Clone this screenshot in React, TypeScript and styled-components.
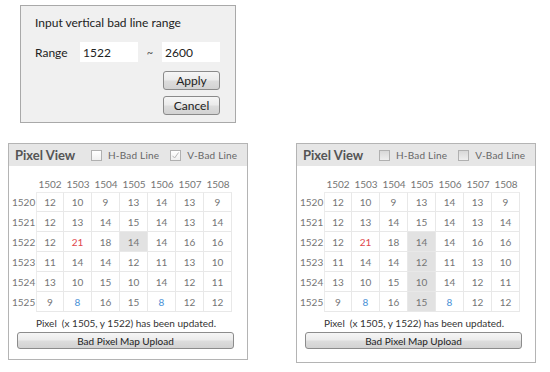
import { FC } from 'react';
import styled, { createGlobalStyle } from 'styled-components';

const GlobalStyle = createGlobalStyle`
  html, body {
    margin: 0;
    padding: 0;
    background: #ffffff;
    font-family: 'Lato', 'Noto Sans', sans-serif;
  }
`;

const Page = styled.div`
  width: 550px;
  height: 372px;
  padding-top: 5px;
  box-sizing: border-box;
  display: flex;
  flex-direction: column;
`;

const Dialog = styled.div`
  margin-left: 20px;
  width: 216px;
  height: 118px;
  box-sizing: border-box;
  border: 1px solid #a9a9a9;
  background: #f0f0f0;
  padding: 10px 15px 0 14px;
  display: flex;
  flex-direction: column;
`;

const DialogTitle = styled.div`
  font-size: 12px;
  line-height: 14px;
  color: #222;
`;

const RangeRow = styled.div`
  margin-top: 12px;
  display: flex;
  align-items: center;
`;

const RangeLabel = styled.span`
  width: 45px;
  font-size: 12px;
  color: #222;
`;

const RangeInput = styled.input`
  width: 58px;
  height: 20px;
  box-sizing: border-box;
  border: none;
  background: #ffffff;
  padding: 0 3px;
  font-family: inherit;
  font-size: 12px;
  color: #222;
  outline: none;
`;

const Tilde = styled.span`
  width: 24px;
  text-align: center;
  font-size: 11px;
  color: #555;
`;

const ButtonColumn = styled.div`
  display: flex;
  flex-direction: column;
  align-items: flex-end;
  gap: 6px;
  margin-top: 9px;
`;

const WinButton = styled.button<{ $width: number }>`
  width: ${(p) => p.$width}px;
  height: 19px;
  box-sizing: border-box;
  border: 1px solid #8a8a8a;
  border-radius: 3px;
  background: linear-gradient(#f6f6f6 0%, #ebebeb 48%, #dddddd 52%, #d2d2d2 100%);
  font-family: inherit;
  font-size: 12px;
  color: #222;
  padding: 0;
  cursor: pointer;
`;

const PanelRow = styled.div`
  margin-top: 20px;
  padding-left: 8px;
  display: flex;
  gap: 48px;
  align-items: flex-start;
`;

const Panel = styled.div<{ $height: number }>`
  width: 240px;
  height: ${(p) => p.$height}px;
  box-sizing: border-box;
  border: 1px solid #b4b4b4;
  background: #ffffff;
  display: flex;
  flex-direction: column;
`;

const PanelHeader = styled.div`
  height: 22px;
  background: #e6e6e6;
  display: flex;
  align-items: center;
  padding-left: 6px;
  white-space: nowrap;
`;

const PanelTitle = styled.span`
  flex-shrink: 0;
  font-size: 13px;
  font-weight: 700;
  color: #555;
  width: 76px;
`;

const CheckGroup = styled.label`
  flex-shrink: 0;
  display: flex;
  align-items: center;
  gap: 6px;
  margin-right: 11px;
  font-size: 10px;
  color: #666;
  letter-spacing: 0.2px;
  white-space: nowrap;
`;

const CheckBox = styled.span<{ $shaded?: boolean }>`
  width: 11px;
  height: 11px;
  box-sizing: border-box;
  border: 1px solid #b0b0b0;
  background: ${(p) =>
    p.$shaded ? 'linear-gradient(#d8d8d8, #eeeeee)' : 'linear-gradient(#ffffff, #f0f0f0)'};
  display: flex;
  align-items: center;
  justify-content: center;
`;

const PanelBody = styled.div`
  padding: 9px 0 0 3px;
  display: flex;
  flex-direction: column;
`;

const Grid = styled.div`
  display: grid;
  grid-template-columns: 24px repeat(7, 28px);
  grid-template-rows: 17px;
  grid-auto-rows: 20px;
  font-size: 10px;
  color: #757575;
`;

const ColHead = styled.div`
  display: flex;
  align-items: center;
  justify-content: center;
`;

const RowHead = styled.div`
  display: flex;
  align-items: center;
`;

const Cell = styled.div<{ $hl?: boolean; $tone?: 'red' | 'blue'; $left?: boolean; $top?: boolean }>`
  display: flex;
  align-items: center;
  justify-content: center;
  border-right: 1px solid #e8e8e8;
  border-bottom: 1px solid #e8e8e8;
  border-left: ${(p) => (p.$left ? '1px solid #ececec' : 'none')};
  border-top: ${(p) => (p.$top ? '1px solid #ececec' : 'none')};
  background: ${(p) => (p.$hl ? '#e2e2e2' : '#ffffff')};
  color: ${(p) => (p.$tone === 'red' ? '#e0474c' : p.$tone === 'blue' ? '#4a8fd6' : '#757575')};
`;

const Status = styled.div`
  margin-top: 5px;
  text-align: center;
  font-size: 10px;
  line-height: 13px;
  color: #333;
  width: 228px;
`;

const UploadButton = styled(WinButton)`
  margin-top: 2px;
  margin-left: 5px;
  height: 17px;
  font-size: 10px;
  border-color: #8c8c8c;
`;

const cols = [1502, 1503, 1504, 1505, 1506, 1507, 1508];
const rows: { y: number; v: number[] }[] = [
  { y: 1520, v: [12, 10, 9, 13, 14, 13, 9] },
  { y: 1521, v: [12, 13, 14, 15, 14, 13, 14] },
  { y: 1522, v: [12, 21, 18, 14, 14, 16, 16] },
  { y: 1523, v: [11, 14, 14, 12, 11, 13, 10] },
  { y: 1524, v: [13, 10, 15, 10, 14, 12, 11] },
  { y: 1525, v: [9, 8, 16, 15, 8, 12, 12] },
];

const toneOf = (y: number, c: number): 'red' | 'blue' | undefined => {
  if (y === 1522 && c === 1503) return 'red';
  if (y === 1525 && (c === 1503 || c === 1506)) return 'blue';
  return undefined;
};

const Check = () => (
  <svg width="9" height="9" viewBox="0 0 9 9">
    <path d="M1.5 4.8 L3.6 7 L7.6 1.5" fill="none" stroke="#b8b8b8" strokeWidth="1" />
  </svg>
);

interface PixelPanelProps {
  height: number;
  vChecked: boolean;
  shaded: boolean;
  highlight: (y: number, c: number) => boolean;
}

const PixelPanel: FC<PixelPanelProps> = ({ height, vChecked, shaded, highlight }) => (
  <Panel $height={height}>
    <PanelHeader>
      <PanelTitle>Pixel View</PanelTitle>
      <CheckGroup>
        <CheckBox $shaded={shaded} />
        H-Bad Line
      </CheckGroup>
      <CheckGroup>
        <CheckBox $shaded={shaded}>{vChecked && <Check />}</CheckBox>
        V-Bad Line
      </CheckGroup>
    </PanelHeader>
    <PanelBody>
      <Grid>
        <div />
        {cols.map((c) => (
          <ColHead key={c}>{c}</ColHead>
        ))}
        {rows.map((r, ri) => [
          <RowHead key={`h${r.y}`}>{r.y}</RowHead>,
          ...r.v.map((v, i) => (
            <Cell
              key={`${r.y}-${i}`}
              $hl={highlight(r.y, cols[i])}
              $tone={toneOf(r.y, cols[i])}
              $left={i === 0}
              $top={ri === 0}
            >
              {v}
            </Cell>
          )),
        ])}
      </Grid>
      <Status>Pixel&nbsp; (x 1505, y 1522) has been updated.</Status>
      <UploadButton $width={217}>Bad Pixel Map Upload</UploadButton>
    </PanelBody>
  </Panel>
);

const App: FC = () => (
  <Page>
    <GlobalStyle />
    <Dialog>
      <DialogTitle>Input vertical bad line range</DialogTitle>
      <RangeRow>
        <RangeLabel>Range</RangeLabel>
        <RangeInput defaultValue="1522" />
        <Tilde>~</Tilde>
        <RangeInput defaultValue="2600" />
      </RangeRow>
      <ButtonColumn>
        <WinButton $width={57}>Apply</WinButton>
        <WinButton $width={57}>Cancel</WinButton>
      </ButtonColumn>
    </Dialog>
    <PanelRow>
      <PixelPanel
        height={217}
        vChecked
        shaded={false}
        highlight={(y, c) => y === 1522 && c === 1505}
      />
      <PixelPanel
        height={220}
        vChecked={false}
        shaded
        highlight={(y, c) => y >= 1522 && c === 1505}
      />
    </PanelRow>
  </Page>
);

export default App;
